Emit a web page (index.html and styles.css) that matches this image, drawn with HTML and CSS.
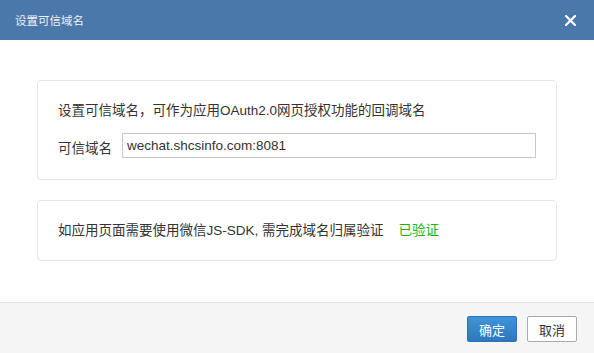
FILE: index.html
```html
<!DOCTYPE html>
<html>
  <head>
    <meta charset="utf-8">
    <title>设置可信域名</title>
    <link rel="stylesheet" href="styles.css">
  </head>
  <body>
    <div class="dialog">
      <div class="dialog-header">
        <span class="dialog-title">设置可信域名</span>
        <span class="dialog-close">
          <svg width="11" height="11" viewBox="0 0 11 11">
            <path d="M1 1L10 10M10 1L1 10" stroke="#fff" stroke-width="2.2" stroke-linecap="square"/>
          </svg>
        </span>
      </div>
      <div class="dialog-body">
        <div class="card">
          <p class="tip">设置可信域名，可作为应用OAuth2.0网页授权功能的回调域名</p>
          <div class="field">
            <label for="domain">可信域名</label>
            <input type="text" id="domain" value="wechat.shcsinfo.com:8081">
          </div>
        </div>
        <div class="card">
          <p class="tip">如应用页面需要使用微信JS-SDK, 需完成域名归属验证<span class="verified">已验证</span></p>
        </div>
      </div>
      <div class="dialog-footer">
        <button class="btn btn-primary">确定</button>
        <button class="btn">取消</button>
      </div>
    </div>
  </body>
</html>
```

FILE: styles.css
```css
body {
  margin: 0;
  font-family: "Liberation Sans", "Noto Sans CJK SC", sans-serif;
  font-size: 13.5px;
  color: #333;
  background: #fff;
}
.dialog {
  width: 594px;
  height: 353px;
  display: flex;
  flex-direction: column;
}
.dialog-header {
  height: 40px;
  background-color: #4b78aa;
  display: flex;
  align-items: center;
  justify-content: space-between;
  padding: 0 18px 0 15px;
}
.dialog-title {
  color: #eef2f7;
  font-size: 11.5px;
}
.dialog-close {
  display: flex;
  margin-top: 1px;
}
.dialog-body {
  flex: 1;
  padding: 40px 37px 0;
}
.card {
  border: 1px solid #e6e6e6;
  border-radius: 4px;
  padding: 20px 20px 21px;
  margin-bottom: 20px;
}
.card + .card {
  padding-bottom: 19px;
}
.tip {
  margin: 0;
  line-height: 20px;
}
.verified {
  color: #13b512;
  margin-left: 15px;
}
.field {
  display: flex;
  align-items: center;
  margin-top: 12px;
}
.field label {
  margin-right: 10px;
  margin-top: 2px;
}
.field input {
  flex: 1;
  height: 25px;
  box-sizing: border-box;
  border: 1px solid #c8c8c8;
  padding: 0 4px;
  font-family: "Liberation Sans", sans-serif;
  font-size: 13.5px;
  color: #333;
  outline: none;
}
.dialog-footer {
  height: 51px;
  border-top: 1px solid #e0e0e0;
  background-color: #f5f5f5;
  display: flex;
  justify-content: flex-end;
  align-items: flex-start;
  padding: 13px 17px 0 0;
  box-sizing: border-box;
  gap: 10px;
}
.btn {
  width: 50px;
  height: 26px;
  border: 1px solid #aaa;
  border-radius: 2px;
  background: #fff;
  color: #333;
  font-family: "Liberation Sans", "Noto Sans CJK SC", sans-serif;
  font-size: 13px;
  padding: 0;
  cursor: pointer;
}
.btn-primary {
  border-color: #2f72b4;
  background: linear-gradient(#4193da, #2d78bd);
  color: #fff;
}
```
